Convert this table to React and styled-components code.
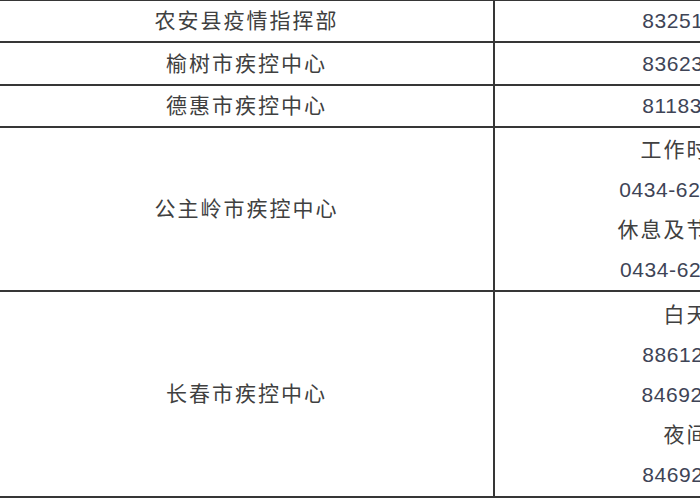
import React from 'react';
import styled, { createGlobalStyle } from 'styled-components';

const GlobalStyle = createGlobalStyle`
  html, body {
    margin: 0;
    padding: 0;
    background: #ffffff;
    overflow: hidden;
  }
  body {
    font-family: "Liberation Sans", "Noto Sans CJK SC", sans-serif;
  }
`;

const Page = styled.div`
  width: 700px;
  height: 500px;
  overflow: hidden;
`;

const Table = styled.table`
  border-collapse: collapse;
  table-layout: fixed;
  width: 888px;
  margin-left: -2px;
  margin-top: -1px;
  color: #404040;
  font-size: 21px;
`;

const Cell = styled.td`
  border: 2px solid #363636;
  padding: ${({ $multi }) => ($multi ? '1px 0 0' : '0')};
  text-align: center;
  vertical-align: middle;
  line-height: 40px;
  height: ${({ $height }) => $height}px;
`;

const Name = styled.span`
  letter-spacing: 2px;
`;

const Line = styled.div`
  height: 40px;
  line-height: 40px;
  white-space: nowrap;
  letter-spacing: ${({ $num }) => ($num ? '0.6px' : '2px')};
  color: ${({ $num }) => ($num ? '#3e4456' : '#404040')};
`;

const rows = [
  { name: '农安县疫情指挥部', lines: ['83251120'], height: 40 },
  { name: '榆树市疾控中心', lines: ['83623110'], height: 41 },
  { name: '德惠市疾控中心', lines: ['81183120'], height: 40 },
  {
    name: '公主岭市疾控中心',
    lines: ['工作时间:', '0434-6262120', '休息及节假日:', '0434-6262110'],
    height: 161,
  },
  {
    name: '长春市疾控中心',
    lines: ['白天:', '88612110', '84692120', '夜间:', '84692110'],
    height: 203,
  },
];

const isNumber = (text) => /^[0-9-]+$/.test(text);

export default function App() {
  return (
    <Page>
      <GlobalStyle />
      <Table>
        <colgroup>
          <col style={{ width: 495 }} />
          <col style={{ width: 393 }} />
        </colgroup>
        <tbody>
          {rows.map((row) => (
            <tr key={row.name}>
              <Cell $height={row.height}>
                <Name>{row.name}</Name>
              </Cell>
              <Cell $height={row.height} $multi={row.lines.length > 1}>
                {row.lines.map((text, i) => (
                  <Line key={i} $num={isNumber(text)}>
                    {text}
                  </Line>
                ))}
              </Cell>
            </tr>
          ))}
        </tbody>
      </Table>
    </Page>
  );
}
